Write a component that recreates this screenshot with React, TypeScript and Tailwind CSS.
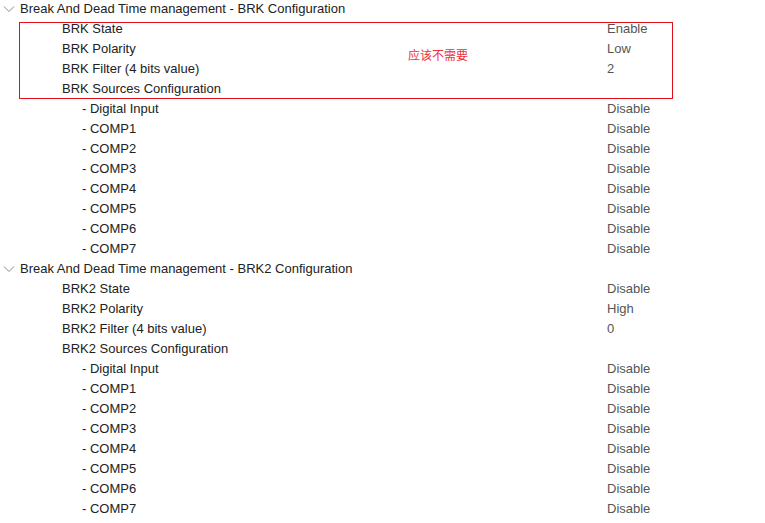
type Row = { label: string; value?: string; indent: 1 | 2 };

const comps = ["COMP1", "COMP2", "COMP3", "COMP4", "COMP5", "COMP6", "COMP7"];

function group(prefix: string, state: string, polarity: string, filter: string): Row[] {
  return [
    { label: `${prefix} State`, value: state, indent: 1 },
    { label: `${prefix} Polarity`, value: polarity, indent: 1 },
    { label: `${prefix} Filter (4 bits value)`, value: filter, indent: 1 },
    { label: `${prefix} Sources Configuration`, indent: 1 },
    { label: "- Digital Input", value: "Disable", indent: 2 },
    ...comps.map((c) => ({ label: `- ${c}`, value: "Disable", indent: 2 as const })),
  ];
}

const sections = [
  {
    title: "Break And Dead Time management - BRK Configuration",
    rows: group("BRK", "Enable", "Low", "2"),
  },
  {
    title: "Break And Dead Time management - BRK2 Configuration",
    rows: group("BRK2", "Disable", "High", "0"),
  },
];

function Chevron() {
  return (
    <svg width="12" height="8" viewBox="0 0 12 8" className="ml-[3px] mr-[5px] mt-[-1px]">
      <polyline points="1,1.5 6,6.5 11,1.5" fill="none" stroke="#8a8a8a" strokeWidth="1" />
    </svg>
  );
}

export default function App() {
  return (
    <div className="relative w-[765px] h-[523px] overflow-hidden bg-white font-['Liberation_Sans',Arial,sans-serif] text-[13px] text-[#222]">
      <div className="-mt-[1px] flex flex-col">
        {sections.map((s) => (
          <div key={s.title} className="flex flex-col">
            <div className="h-[20px] flex items-center">
              <Chevron />
              <span>{s.title}</span>
            </div>
            {s.rows.map((r) => (
              <div key={r.label} className="h-[20px] flex items-center">
                <span className={r.indent === 1 ? "w-[607px] pl-[62px]" : "w-[607px] pl-[82px]"}>
                  {r.label}
                </span>
                {r.value && <span className="text-[#555]">{r.value}</span>}
              </div>
            ))}
          </div>
        ))}
      </div>

      {/* annotation */}
      <div className="absolute left-[19px] top-[22px] w-[654px] h-[77px] border border-[#e3101c]" />
      <span className="absolute left-[408px] top-[46px] text-[12px] text-[#f0303c] font-['Noto_Sans_CJK_SC',sans-serif]">
        应该不需要
      </span>
    </div>
  );
}
